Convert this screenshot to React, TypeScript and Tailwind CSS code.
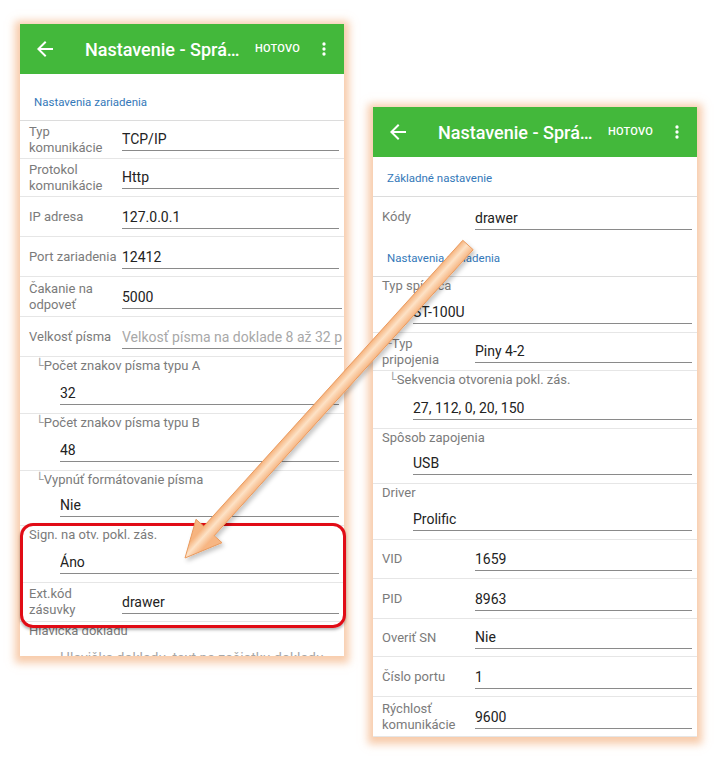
import type { ReactNode } from 'react';

type Row =
  | { kind: 'section'; text: string; h: string }
  | { kind: 'inline'; label: ReactNode; value: string; h: string; noBorder?: boolean; wide?: boolean; placeholder?: boolean }
  | { kind: 'stack'; label: string; value: string; h: string; sub?: boolean; cut?: boolean; placeholder?: boolean };

const leftRows: Row[] = [
  { kind: 'section', text: 'Nastavenia zariadenia', h: 'h-[47px]' },
  { kind: 'inline', label: <>Typ<br />komunikácie</>, value: 'TCP/IP', h: 'h-[38px]' },
  { kind: 'inline', label: <>Protokol<br />komunikácie</>, value: 'Http', h: 'h-[38px]' },
  { kind: 'inline', label: 'IP adresa', value: '127.0.0.1', h: 'h-[40px]' },
  { kind: 'inline', label: 'Port zariadenia', value: '12412', h: 'h-[40px]' },
  { kind: 'inline', label: <>Čakanie na<br />odpoveť</>, value: '5000', h: 'h-[40px]', wide: true },
  { kind: 'inline', label: 'Velkosť písma', value: 'Velkosť písma na doklade 8 až 32 pri', h: 'h-[40px]', wide: true, placeholder: true },
  { kind: 'stack', label: 'Počet znakov písma typu A', value: '32', h: 'h-[57px]', sub: true },
  { kind: 'stack', label: 'Počet znakov písma typu B', value: '48', h: 'h-[57px]', sub: true },
  { kind: 'stack', label: 'Vypnúť formátovanie písma', value: 'Nie', h: 'h-[55px]', sub: true },
  { kind: 'stack', label: 'Sign. na otv. pokl. zás.', value: 'Áno', h: 'h-[57px]' },
  { kind: 'inline', label: <>Ext.kód<br />zásuvky</>, value: 'drawer', h: 'h-[39px]' },
  { kind: 'stack', label: 'Hlavička dokladu', value: 'Hlavička dokladu, text na začiatku dokladu', h: 'h-[60px]', cut: true, placeholder: true },
];

const rightRows: Row[] = [
  { kind: 'section', text: 'Základné nastavenie', h: 'h-[40px]' },
  { kind: 'inline', label: 'Kódy', value: 'drawer', h: 'h-[40px]', noBorder: true },
  { kind: 'section', text: 'Nastavenia zariadenia', h: 'h-[40px]' },
  { kind: 'stack', label: 'Typ spínača', value: 'ST-100U', h: 'h-[56px]' },
  {
    kind: 'inline',
    label: (
      <>
        <span className="pl-[2px] text-[#a3a3a3]">└</span>Typ
        <br />
        pripojenia
      </>
    ),
    value: 'Piny 4-2',
    h: 'h-[38px]',
  },
  { kind: 'stack', label: 'Sekvencia otvorenia pokl. zás.', value: '27, 112, 0, 20, 150', h: 'h-[58px]', sub: true },
  { kind: 'stack', label: 'Spôsob zapojenia', value: 'USB', h: 'h-[55px]' },
  { kind: 'stack', label: 'Driver', value: 'Prolific', h: 'h-[56px]' },
  { kind: 'inline', label: 'VID', value: '1659', h: 'h-[39px]' },
  { kind: 'inline', label: 'PID', value: '8963', h: 'h-[40px]' },
  { kind: 'inline', label: 'Overiť SN', value: 'Nie', h: 'h-[38px]' },
  { kind: 'inline', label: 'Číslo portu', value: '1', h: 'h-[40px]' },
  { kind: 'inline', label: <>Rýchlosť<br />komunikácie</>, value: '9600', h: 'h-[40px]' },
];

function Header() {
  return (
    <div className="flex h-[50px] shrink-0 items-center bg-[#43b83b] pl-[13px] pr-[10px] text-white">
      <svg width="24" height="24" viewBox="0 0 24 24" fill="currentColor">
        <path d="M20 11H7.83l5.59-5.59L12 4l-8 8 8 8 1.41-1.41L7.83 13H20v-2z" />
      </svg>
      <div className="ml-[28px] flex-1 whitespace-nowrap text-[18px] font-medium">Nastavenie - Sprá…</div>
      <div className="text-[11px] font-medium tracking-[0.2px]">HOTOVO</div>
      <svg className="ml-[14px]" width="20" height="20" viewBox="0 0 24 24" fill="currentColor">
        <circle cx="12" cy="6" r="2" />
        <circle cx="12" cy="12" r="2" />
        <circle cx="12" cy="18" r="2" />
      </svg>
    </div>
  );
}

function SettingRow({ row }: { row: Row }) {
  if (row.kind === 'section') {
    return (
      <div className={`flex shrink-0 items-end border-b border-[#dcdcdc] pb-[11px] pl-[14px] text-[11.5px] leading-[14px] text-[#3478b9] ${row.h}`}>
        {row.text}
      </div>
    );
  }

  if (row.kind === 'inline') {
    return (
      <div className={`flex shrink-0 items-center pl-[9px] ${row.wide ? 'pr-[2px]' : 'pr-[5px]'} ${row.noBorder ? '' : 'border-b border-[#e6e6e6]'} ${row.h}`}>
        <div className="w-[93px] shrink-0 text-[13px] leading-[16px] text-[#7b7b7b]">{row.label}</div>
        <div
          className={`mb-[7px] flex-1 self-end overflow-hidden whitespace-nowrap border-b border-[#8a8a8a] pb-[2px] text-[14px] leading-[18px] ${
            row.placeholder ? 'text-[#a8a8a8]' : 'text-[#222222]'
          }`}
        >
          {row.value}
        </div>
      </div>
    );
  }

  return (
    <div className={`flex shrink-0 flex-col border-b border-[#e6e6e6] ${row.h}`}>
      <div className={`pt-[1px] text-[13px] leading-[16px] text-[#7b7b7b] ${row.sub ? 'pl-[16px]' : 'pl-[9px]'}`}>
        {row.sub && <span className="text-[#a3a3a3]">└</span>}
        {row.label}
      </div>
      <div
        className={`ml-[40px] mr-[5px] overflow-hidden whitespace-nowrap pb-[2px] text-[14px] leading-[18px] ${
          row.cut ? 'mt-[10px]' : 'mt-auto mb-[8px] border-b border-[#8a8a8a]'
        } ${row.placeholder ? 'text-[#a8a8a8]' : 'text-[#222222]'}`}
      >
        {row.value}
      </div>
    </div>
  );
}

function Phone({ rows, className }: { rows: Row[]; className: string }) {
  return (
    <div className={`flex w-[324px] shrink-0 flex-col overflow-hidden bg-white shadow-[0_2px_8px_5px_rgba(240,160,100,0.55)] ${className}`}>
      <Header />
      {rows.map((row, i) => (
        <SettingRow key={i} row={row} />
      ))}
    </div>
  );
}

function Arrow() {
  return (
    <svg className="pointer-events-none absolute left-0 top-0" width="720" height="766" viewBox="0 0 720 766">
      <defs>
        <linearGradient id="arrowFill" gradientUnits="userSpaceOnUse" x1="462.8" y1="240.3" x2="473.2" y2="249.7">
          <stop offset="0" stopColor="#f6b47f" />
          <stop offset="0.45" stopColor="#fde2c6" />
          <stop offset="1" stopColor="#f7b683" />
        </linearGradient>
        <filter id="arrowShadow" x="-10%" y="-10%" width="120%" height="120%">
          <feDropShadow dx="2" dy="3" stdDeviation="2" floodColor="#000" floodOpacity="0.22" />
        </filter>
      </defs>
      <polygon
        points="462.8,240.3 203.8,526.3 196,519.3 185,558 222,542.7 214.2,535.7 473.2,249.7"
        fill="url(#arrowFill)"
        stroke="#e99a5e"
        strokeWidth="1"
        strokeLinejoin="round"
        filter="url(#arrowShadow)"
      />
    </svg>
  );
}

export default function App() {
  return (
    <div className="relative flex h-[766px] w-[720px] items-start overflow-hidden bg-white font-[Roboto,'DejaVu_Sans',sans-serif]">
      <Phone rows={leftRows} className="ml-[20px] mt-[24px] h-[632px]" />
      <Phone rows={rightRows} className="ml-[29px] mt-[107px] h-[630px]" />

      <div className="pointer-events-none absolute left-[20px] top-[523px] h-[105px] w-[326px] rounded-[13px] border-[3px] border-[#e10c16] shadow-[0_2px_3px_rgba(0,0,0,0.3)]" />
      <Arrow />
    </div>
  );
}
